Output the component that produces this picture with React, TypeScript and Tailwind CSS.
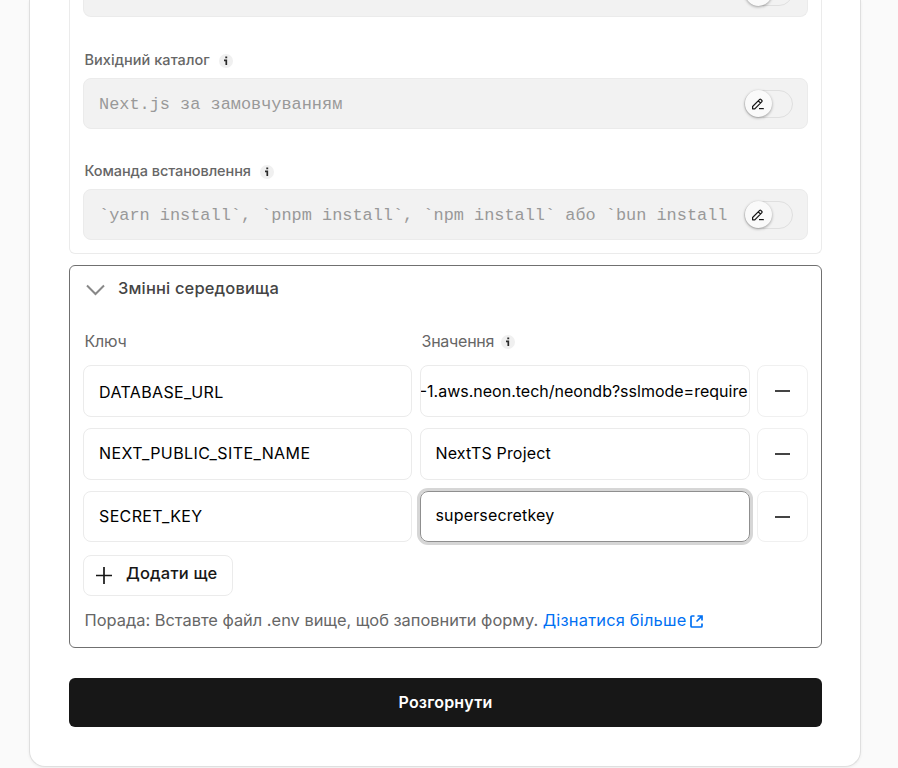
import React from "react";

function Info() {
  return (
    <span className="mt-px flex h-[14px] w-[14px] items-center justify-center rounded-full bg-[#f0f0f0]">
      <svg width="14" height="14" viewBox="0 0 14 14" fill="none" stroke="#2a2a2a" strokeWidth="1.7">
        <path d="M5 6.4H7.3V11M6.3 3.4H8.2" />
      </svg>
    </span>
  );
}

function PenToggle() {
  return (
    <span className="flex h-[28px] w-[49px] shrink-0 items-center rounded-full border border-[#dfdfdf]">
      <span className="flex h-[27px] w-[27px] items-center justify-center rounded-full bg-[#fafafa] shadow-[0_1px_3px_rgba(0,0,0,0.35)]">
        <svg className="mr-px mt-px" width="14" height="14" viewBox="0 0 14 14" fill="none" stroke="#171717" strokeWidth="1.2" strokeLinejoin="round">
          <path d="M1.6 11.8V9.5L8.7 2.4a.8.8 0 0 1 1.1 0l1.1 1.1a.8.8 0 0 1 0 1.1L3.8 11.8ZM7.3 3.8l2.2 2.2" />
          <path d="M8 11.6H12.8" />
        </svg>
      </span>
    </span>
  );
}

function LockedField({ text }: { text: string }) {
  return (
    <div className="flex h-[51px] items-center justify-between rounded-lg border border-[#ebebeb] bg-[#f2f2f2] pl-[15px] pr-[14px]">
      <span className="mt-[3px] whitespace-pre font-['Liberation_Mono',monospace] text-[16.9px] leading-6 text-[#999999]">{text}</span>
      <PenToggle />
    </div>
  );
}

function Minus() {
  return (
    <button className="flex w-[51px] items-center justify-center rounded-lg border border-[#f0f0f0]">
      <span className="h-[2px] w-[15px] bg-[#444]" />
    </button>
  );
}

const box = "flex items-center overflow-hidden rounded-lg border text-[16px] whitespace-nowrap text-black";

export default function App() {
  return (
    <div className="h-[768px] overflow-hidden bg-[#fafafa] pl-[29px] font-[Inter,'Liberation_Sans',sans-serif]">
      <main className="h-[767px] w-[832px] rounded-b-2xl border border-t-0 border-[#dfdfdf] bg-white pl-[39px] shadow-[0_1px_3px_rgba(0,0,0,0.06)]">
        <section className="h-[254px] w-[753px] rounded-b-md border border-t-0 border-[#ebebeb] px-[13px]">
          <div className="flex h-[17px] items-end justify-end overflow-hidden rounded-b-lg border border-t-0 border-[#ebebeb] bg-[#f2f2f2] pr-[14px] pb-[10px]">
            <PenToggle />
          </div>
          <div className="mt-[33px] flex h-5 items-center gap-[9px] pl-[1.5px] text-[14.5px] font-medium text-[#666]">
            <span className="tracking-[0.05px]">Вихідний каталог</span>
            <Info />
          </div>
          <div className="mt-2">
            <LockedField text="Next.js за замовчуванням" />
          </div>
          <div className="mt-8 flex h-5 items-center gap-[9px] pl-[1.5px] text-[14.5px] font-medium text-[#666]">
            <span className="tracking-[-0.08px]">Команда встановлення</span>
            <Info />
          </div>
          <div className="mt-2">
            <LockedField text="`yarn install`, `pnpm install`, `npm install` або `bun install" />
          </div>
        </section>

        <section className="mt-[11px] h-[383px] w-[753px] rounded-md border border-[#707070] px-[13px]">
          <h2 className="flex h-[46px] items-center pl-[3px] text-[16.5px] font-medium text-[#444]">
            <svg className="mr-[13px] mt-[2px]" width="19" height="12" viewBox="0 0 19 12" fill="none" stroke="#888" strokeWidth="2">
              <path d="M1 1.5 9.5 10 18 1.5" />
            </svg>
            <span className="pb-[2px] tracking-[0.15px]">Змінні середовища</span>
          </h2>
          <div className="mt-[17px] grid h-5 grid-cols-[337px_1fr] items-center pl-[1.5px] text-[16px] text-[#666]">
            <span className="pb-px tracking-[-0.2px]">Ключ</span>
            <span className="flex items-center gap-[7px]"><span className="pb-px tracking-[-0.25px]">Значення</span><Info /></span>
          </div>
          <div className="mt-[16px] grid grid-cols-[329px_330px_51px] grid-rows-[52px_52px_51px] justify-between gap-y-[11px]">
            <div className={`${box} border-[#ebebeb] px-[15px]`}><span className="pt-px tracking-[0.38px]">DATABASE_URL</span></div>
            <div className={`${box} justify-end border-[#ebebeb] pr-px`}><span>-1.aws.neon.tech/neondb?sslmode=require</span></div>
            <Minus />
            <div className={`${box} border-[#ebebeb] px-[15px] pb-[2px]`}><span className="tracking-[0.4px]">NEXT_PUBLIC_SITE_NAME</span></div>
            <div className={`${box} border-[#ebebeb] px-[15px] pb-[2px]`}><span className="tracking-[0.17px]">NextTS Project</span></div>
            <Minus />
            <div className={`${box} border-[#ebebeb] px-[15px] pb-[2px]`}><span className="tracking-[0.36px]">SECRET_KEY</span></div>
            <div className={`${box} border-[#8f8f8f] px-[15px] pb-[3px] shadow-[0_0_0_3px_#d6d6d6]`}><span className="tracking-[0.15px]">supersecretkey</span></div>
            <Minus />
          </div>
          <button className="mt-[13px] flex h-[41px] w-[150px] items-center rounded-lg border border-[#ebebeb] pl-3 text-[16.5px] font-medium text-[#171717]">
            <svg className="mr-[14px] mb-px" width="16" height="17" viewBox="0 0 16 17" stroke="#171717" strokeWidth="1.7">
              <path d="M8 0v17M0 8.5h16" />
            </svg>
            <span className="pb-[4px] tracking-[0.18px]">Додати ще</span>
          </button>
          <p className="mt-[12px] flex h-6 items-center whitespace-pre pl-[1.5px] text-[16.4px] text-[#666]">
            <span>Порада: Вставте файл .env вище, щоб заповнити форму. </span>
            <a className="tracking-[0.21px] text-[#0070f3]">Дізнатися більше</a>
            <svg className="ml-[4px] mt-[2px]" width="13" height="13" viewBox="0 0 13 13" fill="none" stroke="#0070f3" strokeWidth="1.7">
              <path d="M4.5 1H2a1 1 0 0 0-1 1v9a1 1 0 0 0 1 1h9a1 1 0 0 0 1-1V8.5M7.5 1H12v4.5M12 1 6.5 6.5" />
            </svg>
          </p>
        </section>

        <button className="mt-[30px] flex h-[49px] w-[753px] items-center justify-center rounded-md bg-[#171717] pb-[2px] text-[16px] font-semibold text-white">
          <span className="tracking-[0.2px]">Розгорнути</span>
        </button>
      </main>
    </div>
  );
}
